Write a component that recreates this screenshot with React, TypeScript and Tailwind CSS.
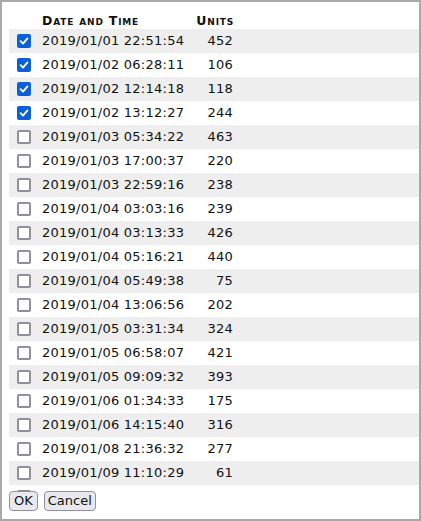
import React from "react";

const rows: [string, number, boolean][] = [
  ["2019/01/01 22:51:54", 452, true],
  ["2019/01/02 06:28:11", 106, true],
  ["2019/01/02 12:14:18", 118, true],
  ["2019/01/02 13:12:27", 244, true],
  ["2019/01/03 05:34:22", 463, false],
  ["2019/01/03 17:00:37", 220, false],
  ["2019/01/03 22:59:16", 238, false],
  ["2019/01/04 03:03:16", 239, false],
  ["2019/01/04 03:13:33", 426, false],
  ["2019/01/04 05:16:21", 440, false],
  ["2019/01/04 05:49:38", 75, false],
  ["2019/01/04 13:06:56", 202, false],
  ["2019/01/05 03:31:34", 324, false],
  ["2019/01/05 06:58:07", 421, false],
  ["2019/01/05 09:09:32", 393, false],
  ["2019/01/06 01:34:33", 175, false],
  ["2019/01/06 14:15:40", 316, false],
  ["2019/01/08 21:36:32", 277, false],
  ["2019/01/09 11:10:29", 61, false],
  ["2019/01/10 03:05:33", 494, false],
];

function Check({ checked }: { checked: boolean }) {
  if (checked) {
    return (
      <span className="flex h-[14px] w-[14px] shrink-0 items-center justify-center rounded-[2px] bg-[#0b5fd9]">
        <svg width="10" height="10" viewBox="0 0 10 10">
          <path d="M1.6 5.2 L4 7.6 L8.5 2.4" fill="none" stroke="white" strokeWidth="1.8" strokeLinecap="round" strokeLinejoin="round" />
        </svg>
      </span>
    );
  }
  return <span className="block h-[14px] w-[14px] shrink-0 rounded-[2px] border-2 border-[#8f8f9d] bg-white" />;
}

export default function App() {
  return (
    <div
      className="flex h-[521px] w-[421px] flex-col border-2 border-[#a9a9a9] bg-white text-[#111]"
      style={{ fontFamily: '"DejaVu Sans", Verdana, sans-serif' }}
    >
      <div className="h-[489px] overflow-hidden pl-[7px] pt-[10px]">
        <div className="flex h-[17px] text-[12.5px] font-bold leading-[17px] tracking-[0.8px] [font-variant:small-caps]">
          <div className="w-[33px]" />
          <div className="w-[148px] whitespace-nowrap">Date and Time</div>
          <div className="w-[44px] text-right">Units</div>
        </div>
        {rows.map(([d, u, c], i) => (
          <div
            key={i}
            className={`flex h-[24px] items-center text-[13px] tracking-[0.25px] ${i % 2 === 0 ? "bg-[#eeeeee]" : "bg-white"}`}
          >
            <div className="ml-[8px] w-[25px]">
              <Check checked={c} />
            </div>
            <div className="w-[148px] whitespace-nowrap">{d}</div>
            <div className="w-[43px] text-right">{u}</div>
          </div>
        ))}
      </div>
      <div className="flex gap-[6px] pl-[7px]">
        <button className="h-[20px] rounded-[4px] border border-[#8f8f9d] bg-[#e9e9ed] px-[4px] text-[13px] leading-[16px] text-[#111]">
          OK
        </button>
        <button className="h-[20px] rounded-[4px] border border-[#8f8f9d] bg-[#e9e9ed] px-[3px] text-[13px] leading-[16px] text-[#111]">
          Cancel
        </button>
      </div>
    </div>
  );
}
